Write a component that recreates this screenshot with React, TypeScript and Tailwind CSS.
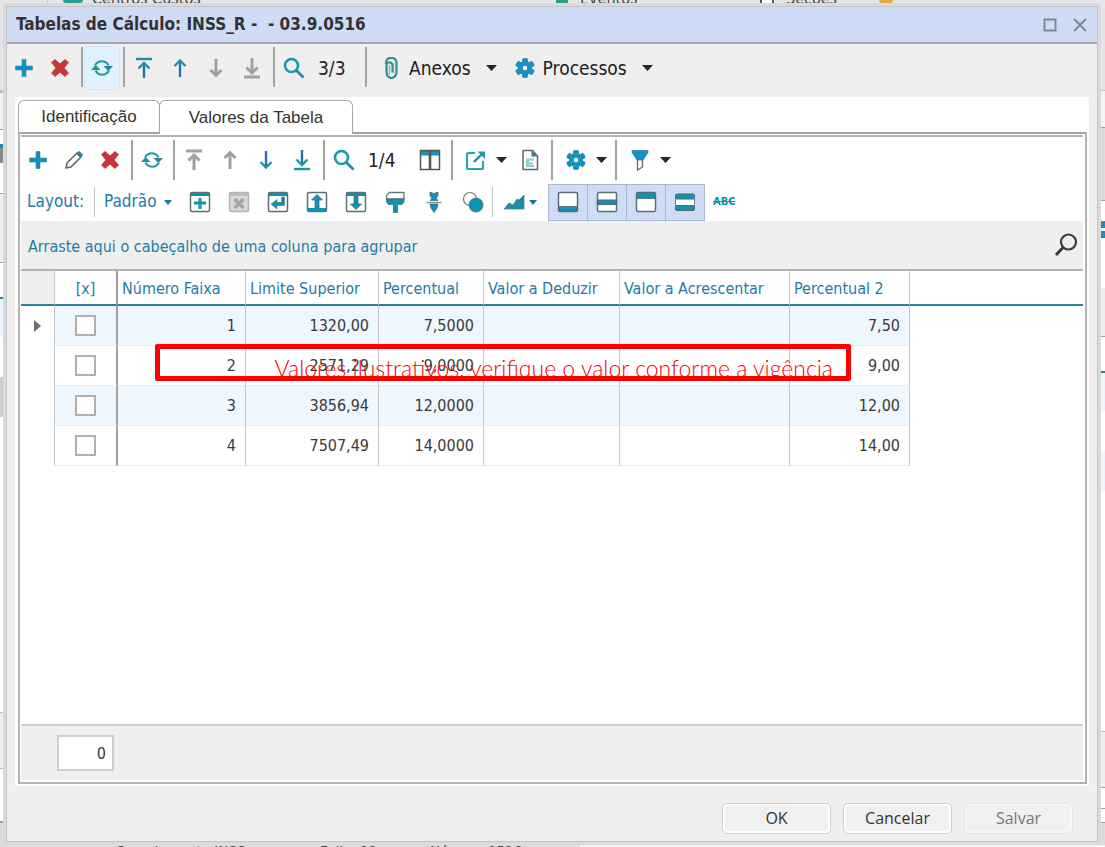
import type { ReactNode } from 'react';
import { clsx } from 'clsx';

type IconProps = { className?: string };

const SIZE = 'h-[22px] w-[22px]';

function Svg({ children, className }: IconProps & { children: ReactNode }) {
  return (
    <svg viewBox="0 0 22 22" fill="none" aria-hidden="true" className={clsx('shrink-0', className ?? SIZE)}>
      {children}
    </svg>
  );
}

const PlusIcon = () => (
  <Svg>
    <path d="M9 2.500h4V9h6.500v4H13v6.500H9V13H2.500V9H9z" fill="#0c93bd" stroke="#3f87a0" strokeWidth=".6" />
  </Svg>
);

const DeleteIcon = () => (
  <Svg>
    <path d="M2.500 5.500l3.500-3L11 7l5-4.500 3.500 3L15 11l4.500 5-3.500 3.500L11 15l-5 4.500L2.500 16 7 11z" fill="#cf3434" stroke="#a23c3c" strokeWidth=".8" />
  </Svg>
);

const RefreshIcon = () => (
  <Svg>
    <path d="M4 8.500a7.500 7.500 0 0 1 13.500 0" stroke="#24999f" strokeWidth="2" />
    <path d="M18 13.500a7.500 7.500 0 0 1-13.500 0" stroke="#24999f" strokeWidth="2" />
    <path d="M12.500 9h9.500L17.300 14z" fill="#2c7fa5" />
    <path d="M0 13h9.500L4.700 8z" fill="#2c8f8f" />
  </Svg>
);

function ArrowIcon({ down, bar, off }: { down?: boolean; bar?: boolean; off?: boolean }) {
  const stem = off ? '#a0a0a0' : '#2f6da6';
  const head = off ? '#a0a0a0' : '#1b93a8';
  const width = off ? 3 : 2.4;
  return (
    <Svg>
      <g transform={down ? 'rotate(180 11 11)' : undefined}>
        <path d={bar ? 'M11 6v15' : 'M11 4v16'} stroke={stem} strokeWidth={width} />
        <path d={bar ? 'M5.500 11.500L11 6l5.500 5.500' : 'M5.500 9L11 3.500 16.500 9'} stroke={head} strokeWidth={width} />
        {bar && <path d="M3 2h16" stroke={head} strokeWidth={width} />}
      </g>
    </Svg>
  );
}

const SearchIcon = () => (
  <Svg>
    <circle cx="8.500" cy="8.500" r="6.500" stroke="#1d98a8" strokeWidth="2.600" />
    <path d="M13.500 13.500l7 7" stroke="#2e86b0" strokeWidth="2.800" />
  </Svg>
);

const ClipIcon = () => (
  <Svg>
    <path d="M6 7V5.500a5 4.500 0 0 1 10.500 0V15a5 6 0 0 1-10 0V9a2.500 2.500 0 0 1 6-1v7.500" stroke="#2f8f96" strokeWidth="2.200" />
    <path d="M9.500 8v9M13.500 6v10" stroke="#6aa9ad" strokeWidth="1.200" />
  </Svg>
);

const GearIcon = () => (
  <Svg>
    <g fill="#0e95c9" stroke="#46788c" strokeWidth=".8">
      <rect x="8.500" y="1.500" width="5" height="19" rx="1" />
      <rect x="8.500" y="1.500" width="5" height="19" rx="1" transform="rotate(60 11 11)" />
      <rect x="8.500" y="1.500" width="5" height="19" rx="1" transform="rotate(120 11 11)" />
    </g>
    <circle cx="11" cy="11" r="7" fill="#0e95c9" />
    <circle cx="11" cy="11" r="2.700" fill="#fff" stroke="#46788c" strokeWidth=".9" />
  </Svg>
);

const PencilIcon = () => (
  <Svg>
    <path d="M3 19l1-5L14 4l4 4L8 18z" fill="#fff" stroke="#606060" strokeWidth="1.500" strokeLinejoin="round" />
    <path d="M13.500 4.500L16 2.500l3.500 3.200-2 2.800z" fill="#1f83b0" stroke="#4a6c7c" strokeWidth="1" />
  </Svg>
);

const ColumnsIcon = () => (
  <Svg>
    <path d="M1.500 2h19v18h-19z" fill="#fff" />
    <path d="M1 1.500h20v5H1z" fill="#0e95c9" />
    <path d="M1.500 1.500h19v19h-19z" stroke="#555" strokeWidth="1.500" />
    <path d="M11 2v18" stroke="#555" strokeWidth="2.600" />
  </Svg>
);

const ExportIcon = () => (
  <Svg>
    <path d="M10 4H3.500C2.500 4 2 4.500 2 5.500v13c0 1 .5 1.500 1.500 1.500h13c1 0 1.500-.5 1.500-1.500V12" stroke="#2ba3a8" strokeWidth="2.200" />
    <path d="M9 13L18.500 3.500" stroke="#2b86ab" strokeWidth="2.400" />
    <path d="M12.500 2.500H20V10z" fill="#2b93ab" />
  </Svg>
);

const DocIcon = () => (
  <Svg>
    <path d="M4 1.500h9.500L18.500 7v13.500H4z" fill="#fff" stroke="#666" strokeWidth="1.500" strokeLinejoin="round" />
    <path d="M12.500 1.500V7.500h6z" fill="#35809c" />
    <path d="M7 9.500h8v2H10v2h4v2h-4v.5h5v2H7z" fill="#8fd0d0" />
  </Svg>
);

const FunnelIcon = () => (
  <Svg>
    <path d="M8.500 9h5v9l-5 3z" fill="#fff" stroke="#666" strokeWidth="1.300" />
    <path d="M3 1.500h16v2L14 11H8L3 3.500z" fill="#0e95c9" stroke="#3f7f97" strokeWidth=".8" />
  </Svg>
);

// Framed icon with a teal header or footer band, shared by the layout toolbar
function Frame({ children, off }: { children?: ReactNode; off?: boolean }) {
  return (
    <Svg>
      <rect x="1.500" y="1.500" width="19" height="19" rx="1.500" fill={off ? '#d8d8d8' : '#fff'} stroke={off ? '#b4b4b4' : '#5c6f74'} strokeWidth="1.500" />
      {children}
    </Svg>
  );
}

const BarTop = () => <path d="M2 2h18v3H2z" fill="#0d93b5" />;

const layoutIcons = [
  {
    label: 'Novo layout',
    icon: <Frame><BarTop /><path d="M9.500 7h3v3.500H17v3h-4.500V18h-3v-4.500H5v-3h4.500z" fill="#1590ab" /></Frame>,
  },
  {
    label: 'Excluir layout',
    off: true,
    icon: (
      <Frame off>
        <path d="M2 2h18v3H2z" fill="#bdbdbd" />
        <path d="M6.500 8l9 9M15.500 8l-9 9" stroke="#a3a3a3" strokeWidth="3.200" />
      </Frame>
    ),
  },
  {
    label: 'Restaurar layout',
    icon: <Frame><BarTop /><path d="M17.500 6v8.500H10V18l-6-4.800L10 8.500v3h4.500V6z" fill="#1590ab" stroke="#4f7480" strokeWidth=".6" /></Frame>,
  },
  {
    label: 'Exportar layout',
    icon: <Frame><path d="M2 17h18v3H2z" fill="#0d93b5" /><path d="M11 3.500L16.500 9H13v8H9V9H5.500z" fill="#1590ab" stroke="#44707c" strokeWidth=".8" /></Frame>,
  },
  {
    label: 'Importar layout',
    icon: <Frame><BarTop /><path d="M11 18.500L16.500 13H13V5H9v8H5.500z" fill="#1590ab" stroke="#44707c" strokeWidth=".8" /></Frame>,
  },
  {
    label: 'Formatar',
    icon: (
      <Svg>
        <path d="M5.500 1.500H20v6.500H2.500V4.500z" fill="#fff" stroke="#6c7679" strokeWidth="1.300" />
        <path d="M2.500 8H20v3l-2 2.500h-4.500v8h-4v-8H4.500L2.500 11z" fill="#0d93b5" stroke="#55676c" strokeWidth=".8" />
      </Svg>
    ),
  },
  {
    label: 'Recortar',
    icon: (
      <Svg>
        <path d="M7 1l4 1.500L15 1v4l-2 2 2 2.500H7L9 7 7 5zM7 13h8l-1 4-3 4.500L8 17z" fill="#0d93b5" stroke="#4c6f79" strokeWidth=".8" />
        <path d="M3.500 11.500h15" stroke="#858e90" strokeWidth="1.400" />
      </Svg>
    ),
  },
  {
    label: 'Formatação condicional',
    icon: (
      <Svg>
        <circle cx="8" cy="8" r="6.500" fill="#fff" stroke="#777" strokeWidth="1.200" />
        <circle cx="14" cy="14" r="7" fill="#0d93b5" stroke="#54737b" strokeWidth=".9" />
      </Svg>
    ),
  },
];

const panelToggles = [
  { label: 'Painel inferior', icon: <Frame><path d="M2 15.500h18V20H2z" fill="#0d93b5" stroke="#4f6970" strokeWidth=".8" /></Frame> },
  { label: 'Painel central', icon: <Frame><path d="M1.500 9h19v4.500h-19z" fill="#0d93b5" stroke="#4f6970" strokeWidth="1.200" /></Frame> },
  { label: 'Painel superior', icon: <Frame><path d="M2 2h18v5.500H2z" fill="#0d93b5" stroke="#4f6970" strokeWidth=".8" /></Frame> },
  {
    label: 'Painel duplo',
    icon: (
      <Svg>
        <path d="M1.500 7.500h19v7h-19z" fill="#fff" stroke="#6f7f84" />
        <rect x="1.500" y="3" width="19" height="5" rx="1.500" fill="#0d93b5" stroke="#4f6970" />
        <rect x="1.500" y="14.500" width="19" height="5" rx="1.500" fill="#0d93b5" stroke="#4f6970" />
      </Svg>
    ),
  },
];

function Caret({ small }: { small?: boolean }) {
  return small ? (
    <svg viewBox="0 0 8 5" className="h-[5px] w-2 shrink-0" aria-hidden="true"><path d="M0 0h8L4 5z" fill="#1577a3" /></svg>
  ) : (
    <svg viewBox="0 0 11 6" className="h-1.5 w-[11px] shrink-0" aria-hidden="true"><path d="M0 0h11L5.500 6z" fill="#262626" /></svg>
  );
}

const Sep = () => <span className="ml-0.5 h-10 w-0.5 shrink-0 bg-[#a3a3a3]" />;

function ToolButton({ label, children, active, disabled }: { label: string; children: ReactNode; active?: boolean; disabled?: boolean }) {
  return (
    <button
      type="button"
      aria-label={label}
      disabled={disabled}
      className={clsx('flex h-[42px] w-[34px] shrink-0 items-center justify-center rounded-sm', active && 'bg-[#e1f1fd] outline outline-[#cfe6f8]')}
    >
      {children}
    </button>
  );
}

function DropButton({ label, children }: { label: string; children: ReactNode }) {
  return (
    <button type="button" aria-label={label} className="flex h-10 w-14 shrink-0 items-center gap-[9px] pl-[10px]">
      {children}
      <Caret />
    </button>
  );
}

const columns = [
  { title: 'Número Faixa', width: 'w-[128px]' },
  { title: 'Limite Superior', width: 'w-[133px]' },
  { title: 'Percentual', width: 'w-[105px]' },
  { title: 'Valor a Deduzir', width: 'w-[136px]' },
  { title: 'Valor a Acrescentar', width: 'w-[170px]' },
  { title: 'Percentual 2', width: 'w-[120px]' },
];

const rows = [
  ['1', '1320,00', '7,5000', '', '', '7,50'],
  ['2', '2571,29', '9,0000', '', '', '9,00'],
  ['3', '3856,94', '12,0000', '', '', '12,00'],
  ['4', '7507,49', '14,0000', '', '', '14,00'],
];

// Slivers of the main window that stay visible round the dialog
const leftEdge = [
  'h-[87px] bg-[#e4e4e4]', 'h-[3px] bg-[#bdbdbd]', 'h-[36px] bg-[#f1f1f1]', 'h-px bg-[#9c9c9c]', 'h-[14px] bg-white',
  'h-[4px] bg-[#168fc0]', 'h-[15px] bg-[#8a8a8a]', 'h-[30px] bg-white', 'h-px bg-[#a0a0a0]', 'h-[68px] bg-[#efefef]',
  'h-px bg-[#a0a0a0]', 'h-[34px] bg-white', 'h-0.5 bg-[#2f7f9d]', 'h-[38px] bg-[#edf6fe]', 'h-[40px] bg-white',
  'h-[40px] bg-[#cfcfcf]', 'h-[295px] bg-white', 'h-px bg-[#bdbdbd]', 'h-[55px] bg-[#efefef]', 'h-px bg-[#bdbdbd]',
  'h-[52px] bg-white', 'h-0.5 bg-[#a0a0a0]',
];

const rightEdge = [
  'h-[87px] bg-[#e5e5e5]', 'h-px bg-[#c4c4c4]', 'h-[36px] bg-[#f3f3f3]', 'h-px bg-[#a0a0a0]', 'h-[72px] bg-[#dcdcdc]',
  'h-px bg-[#a0a0a0]', 'h-[20px] bg-white', 'h-[7px] bg-[#168fc0]', 'h-[3px] bg-white', 'h-[7px] bg-[#168fc0]',
  'h-[50px] bg-white', 'h-[48px] bg-[#efefef]', 'h-px bg-[#a0a0a0]', 'h-[34px] bg-white', 'h-0.5 bg-[#2f7f9d]',
  'h-[38px] bg-[#edf6fe]', 'h-[40px] bg-white', 'h-[40px] bg-[#edf6fe]', 'h-[240px] bg-white', 'h-px bg-[#bdbdbd]',
  'h-[55px] bg-[#efefef]', 'h-px bg-[#a0a0a0]', 'h-[20px] bg-white', 'h-px bg-[#a0a0a0]', 'h-[13px] bg-white', 'h-px bg-[#a0a0a0]',
];

function Edge({ parts, width }: { parts: string[]; width: string }) {
  return (
    <div className={clsx('flex shrink-0 flex-col overflow-hidden bg-[#dcdcdc]', width)} aria-hidden="true">
      {parts.map((part, i) => <span key={i} className={clsx('shrink-0', part)} />)}
    </div>
  );
}

function MainToolbar() {
  return (
    <div className="flex h-[53px] items-start gap-0.5 pt-[3px] text-[19px] text-[#222]">
      <ToolButton label="Incluir"><PlusIcon /></ToolButton>
      <ToolButton label="Excluir"><DeleteIcon /></ToolButton>
      <Sep />
      <ToolButton label="Atualizar" active><RefreshIcon /></ToolButton>
      <Sep />
      <ToolButton label="Primeiro"><ArrowIcon bar /></ToolButton>
      <ToolButton label="Anterior"><ArrowIcon /></ToolButton>
      <ToolButton label="Próximo" disabled><ArrowIcon down off /></ToolButton>
      <ToolButton label="Último" disabled><ArrowIcon down bar off /></ToolButton>
      <Sep />
      <ToolButton label="Pesquisar"><SearchIcon /></ToolButton>
      <span className="flex h-[42px] w-12 items-center pl-[5px]">3/3</span>
      <Sep />
      <button type="button" className="flex h-[42px] items-center pl-[11px]">
        <ClipIcon />
        <span className="ml-[7px] mr-[15px]">Anexos</span>
        <Caret />
      </button>
      <button type="button" className="flex h-[42px] items-center pl-[15px]">
        <GearIcon />
        <span className="ml-[7px] mr-[15px]">Processos</span>
        <Caret />
      </button>
    </div>
  );
}

function GridToolbar() {
  return (
    <div className="flex h-[46px] items-center gap-0.5 text-[19px] text-[#222]">
      <ToolButton label="Incluir"><PlusIcon /></ToolButton>
      <ToolButton label="Editar"><PencilIcon /></ToolButton>
      <ToolButton label="Excluir"><DeleteIcon /></ToolButton>
      <Sep />
      <ToolButton label="Atualizar"><RefreshIcon /></ToolButton>
      <Sep />
      <ToolButton label="Primeiro" disabled><ArrowIcon bar off /></ToolButton>
      <ToolButton label="Anterior" disabled><ArrowIcon off /></ToolButton>
      <ToolButton label="Próximo"><ArrowIcon down /></ToolButton>
      <ToolButton label="Último"><ArrowIcon down bar /></ToolButton>
      <Sep />
      <ToolButton label="Pesquisar"><SearchIcon /></ToolButton>
      <span className="w-12 pl-[5px]">1/4</span>
      <ToolButton label="Colunas"><ColumnsIcon /></ToolButton>
      <Sep />
      <DropButton label="Exportar"><ExportIcon /></DropButton>
      <ToolButton label="Relatório"><DocIcon /></ToolButton>
      <Sep />
      <DropButton label="Processos"><GearIcon /></DropButton>
      <Sep />
      <DropButton label="Filtrar"><FunnelIcon /></DropButton>
    </div>
  );
}

function LayoutToolbar() {
  return (
    <div className="flex h-[38px] items-center text-[17px] text-[#1f7ba6]">
      <span className="w-[66px] pl-[6px]">Layout:</span>
      <span className="ml-[7px] h-[30px] w-px bg-[#c4c4c4]" />
      <button type="button" className="flex w-[85px] items-center justify-between pl-[9px] pr-2">
        Padrão
        <Caret small />
      </button>
      {layoutIcons.map((item) => (
        <button key={item.label} type="button" aria-label={item.label} disabled={item.off} className="flex h-9 w-[39px] shrink-0 items-center justify-center">
          {item.icon}
        </button>
      ))}
      <span className="h-[30px] w-px bg-[#c4c4c4]" />
      <button type="button" aria-label="Gráfico" className="flex h-9 w-[55px] items-center gap-1 pl-[10px]">
        <Svg>
          <path d="M1 18l5-6 4 2 4-6 2 1 5-5v14z" fill="#178fa8" stroke="#4a8590" strokeWidth=".8" />
        </Svg>
        <Caret small />
      </button>
      <div className="flex border-l border-[#a9b8d3]">
        {panelToggles.map((item) => (
          <button
            key={item.label}
            type="button"
            aria-label={item.label}
            aria-pressed="true"
            className="flex h-[37px] w-[39px] items-center justify-center border-y border-r border-[#a9b8d3] bg-[#cfdcf5]"
          >
            {item.icon}
          </button>
        ))}
      </div>
      <button type="button" className="ml-2 text-[11px] font-bold text-[#178fa8] line-through decoration-[#4a7f8a]">ABC</button>
    </div>
  );
}

function ValuesTable() {
  return (
    <div className="relative border-t-2 border-[#b3b3b3]">
      <table className="w-full table-fixed border-separate border-spacing-0 text-[16px]">
        <thead>
          <tr className="h-[35px] text-left text-[#1f7ba6]">
            <th className="w-[34px] border-b-2 border-r border-b-[#2f7f9d] border-r-[#c8c8c8] bg-[#efefef]" />
            <th className="w-[63px] border-b-2 border-r-2 border-b-[#2f7f9d] border-r-[#a0a0a0] pt-0.5 text-center font-normal">[x]</th>
            {columns.map((column) => (
              <th key={column.title} className={clsx('whitespace-nowrap border-b-2 border-r border-b-[#2f7f9d] border-r-[#c8c8c8] pl-1 pt-0.5 font-normal', column.width)}>
                {column.title}
              </th>
            ))}
            <th className="border-b-2 border-b-[#2f7f9d]" />
          </tr>
        </thead>
        <tbody className="text-[#3a3a3a]">
          {rows.map((row, i) => (
            <tr key={row[0]} className={clsx('h-10', i % 2 === 0 && 'bg-[#eef6fe]')}>
              <td className="border-r border-[#c8c8c8] bg-white">
                {i === 0 && (
                  <svg viewBox="0 0 7 12" className="ml-[13px] h-3 w-[7px]" aria-hidden="true"><path d="M0 0l7 6-7 6z" fill="#6d6d6d" /></svg>
                )}
              </td>
              <td className="border-b border-r-2 border-b-[#ececec] border-r-[#a0a0a0]">
                <input type="checkbox" aria-label={`Selecionar faixa ${row[0]}`} className="mx-auto block h-[21px] w-[21px] appearance-none border-2 border-[#b0b0b0] bg-white" />
              </td>
              {row.map((value, j) => (
                <td key={columns[j].title} className="border-b border-r border-b-[#ececec] border-r-[#c8c8c8] pr-[9px] text-right">{value}</td>
              ))}
              <td className="bg-white" />
            </tr>
          ))}
        </tbody>
      </table>
      <div className="absolute left-[134px] top-[73px] flex h-[37px] w-[696px] items-start justify-end overflow-hidden rounded-[2px] border-[5px] border-[#ff0000]">
        <span className="whitespace-nowrap pr-[13px] pt-[6px] font-['Lato',sans-serif] text-[23px] font-light leading-[26px] text-[#ff0000]">
          Valores ilustrativos, verifique o valor conforme a vigência
        </span>
      </div>
    </div>
  );
}

const footerButton = "h-[31px] w-[109px] rounded-[5px] border border-[#cdcdcd] bg-[#f0f0f0] font-['Open_Sans',sans-serif] text-[16px] leading-none text-[#333] shadow-[inset_0_0_0_2px_#fff]";

export default function App() {
  return (
    <div className="flex min-h-screen flex-col bg-[#dcdcdc] font-['DejaVu_Sans_Condensed','DejaVu_Sans',sans-serif]">
      <div className="flex h-[3px] shrink-0 items-end overflow-hidden bg-[#e6e6e6] text-[16px] leading-[9px] text-[#444]" aria-hidden="true">
        <span className="h-[3px] w-[48px] border-r border-[#c4c4c4]" />
        <span className="ml-[15px] h-[3px] w-5 rounded-b-sm bg-[#29a08f]" />
        <span className="ml-[9px] w-[444px]">Centros Custos</span>
        <span className="ml-[20px] h-[3px] w-3 bg-[#29a08f]" />
        <span className="ml-[12px] w-[180px]">Eventos</span>
        <span className="h-[3px] w-3.5 border-x-2 border-[#557] bg-white" />
        <span className="ml-[12px] w-[93px]">Seções</span>
        <span className="h-[3px] w-3.5 rounded-b-full bg-[#e0aa3c]" />
      </div>

      <div className="flex flex-1">
        <Edge parts={leftEdge} width="w-[3px]" />
        <main className="flex min-w-0 flex-1 flex-col border-x-[3px] border-t-[3px] border-[#dadada] bg-[#efefef]">
          <div className="flex flex-1 flex-col border border-[#c6c6c6]">
            <header className="flex h-[37px] items-center justify-between border-b-2 border-[#a6a6a6] bg-[#cfdcf5] pl-[9px] pr-2.5">
              <h1 className="whitespace-pre text-[17px] font-bold text-[#333]">Tabelas de Cálculo: INSS_R -  - 03.9.0516</h1>
              <div className="flex gap-4">
                <button type="button" aria-label="Maximizar" className="h-3.5 w-3.5">
                  <svg viewBox="0 0 14 14" fill="none" className="h-3.5 w-3.5"><path d="M1.500 1.500h11v11h-11z" stroke="#7e8798" strokeWidth="2" /></svg>
                </button>
                <button type="button" aria-label="Fechar" className="h-3.5 w-3.5">
                  <svg viewBox="0 0 14 14" fill="none" className="h-3.5 w-3.5"><path d="M1 1l12 12M13 1L1 13" stroke="#7e8798" strokeWidth="2" /></svg>
                </button>
              </div>
            </header>

            <MainToolbar />

            <section className="mx-2 flex flex-1 flex-col bg-white pb-0.5 pl-[3px] pr-0.5 pt-[3px]">
              <div role="tablist" className="flex h-[32px] font-['Liberation_Sans',Arial,sans-serif] text-[17px] text-[#333]">
                <button type="button" role="tab" aria-selected="false" className="h-[32px] w-[142px] rounded-t-md border border-b-0 border-[#a6a6a6]">Identificação</button>
                <button type="button" role="tab" aria-selected="true" className="relative z-10 -ml-px h-[34px] w-[194px] rounded-t-md border border-b-0 border-[#a6a6a6] bg-white">Valores da Tabela</button>
              </div>
              <div className="flex flex-1 flex-col border-2 border-[#b3b3b3] border-t-[#a6a6a6] bg-white pb-0.5 pl-px pr-0.5 pt-px">
                <div className="border-t-2 border-[#b3b3b3]">
                  <GridToolbar />
                </div>
                <LayoutToolbar />
                <div className="flex h-[48px] items-center justify-between bg-[#efefef] pl-[7px] pr-[5px]">
                  <span className="pt-1 text-[16px] text-[#1f7ba6]">Arraste aqui o cabeçalho de uma coluna para agrupar</span>
                  <button type="button" aria-label="Localizar">
                    <svg viewBox="0 0 24 24" fill="none" className="h-6 w-6">
                      <circle cx="14.500" cy="9" r="7.500" stroke="#3a3a3a" strokeWidth="2.200" />
                      <path d="M9 14.500L2 22" stroke="#3a3a3a" strokeWidth="3" />
                    </svg>
                  </button>
                </div>
                <ValuesTable />
                <div className="mt-auto flex h-14 items-center border-t-2 border-[#cbcbcb] bg-[#efefef] pl-9">
                  <input type="text" aria-label="Contagem" readOnly value="0" className="h-9 w-[57px] border-2 border-[#cfcfcf] bg-white pr-1.5 text-right text-[16px] text-[#3a3a3a]" />
                </div>
              </div>
            </section>

            <footer className="flex h-[55px] items-center justify-end gap-3 pr-6 pt-[9px]">
              <button type="button" className={footerButton}>OK</button>
              <button type="button" className={footerButton}>Cancelar</button>
              <button type="button" disabled className="h-[31px] w-[109px] rounded-[5px] border border-[#e4e4e4] bg-[#f0f0f0] font-['Open_Sans',sans-serif] text-[16px] leading-none text-[#777] shadow-[inset_0_0_0_2px_#f7f7f7]">Salvar</button>
            </footer>
          </div>
        </main>
        <Edge parts={rightEdge} width="w-1" />
      </div>

      <div className="flex h-[5px] shrink-0 items-end" aria-hidden="true">
        <div className="flex h-[2px] w-[580px] overflow-hidden text-[15px] leading-[16px] text-[#444]">
          <span className="w-[115px]">cum</span>
          <span className="w-[205px]">Complemento INSS</span>
          <span className="w-[110px]">Folha 11</span>
          <span>Número 0516</span>
        </div>
        <div className="h-[2px] flex-1 bg-[#f3f3f3]" />
      </div>
    </div>
  );
}
